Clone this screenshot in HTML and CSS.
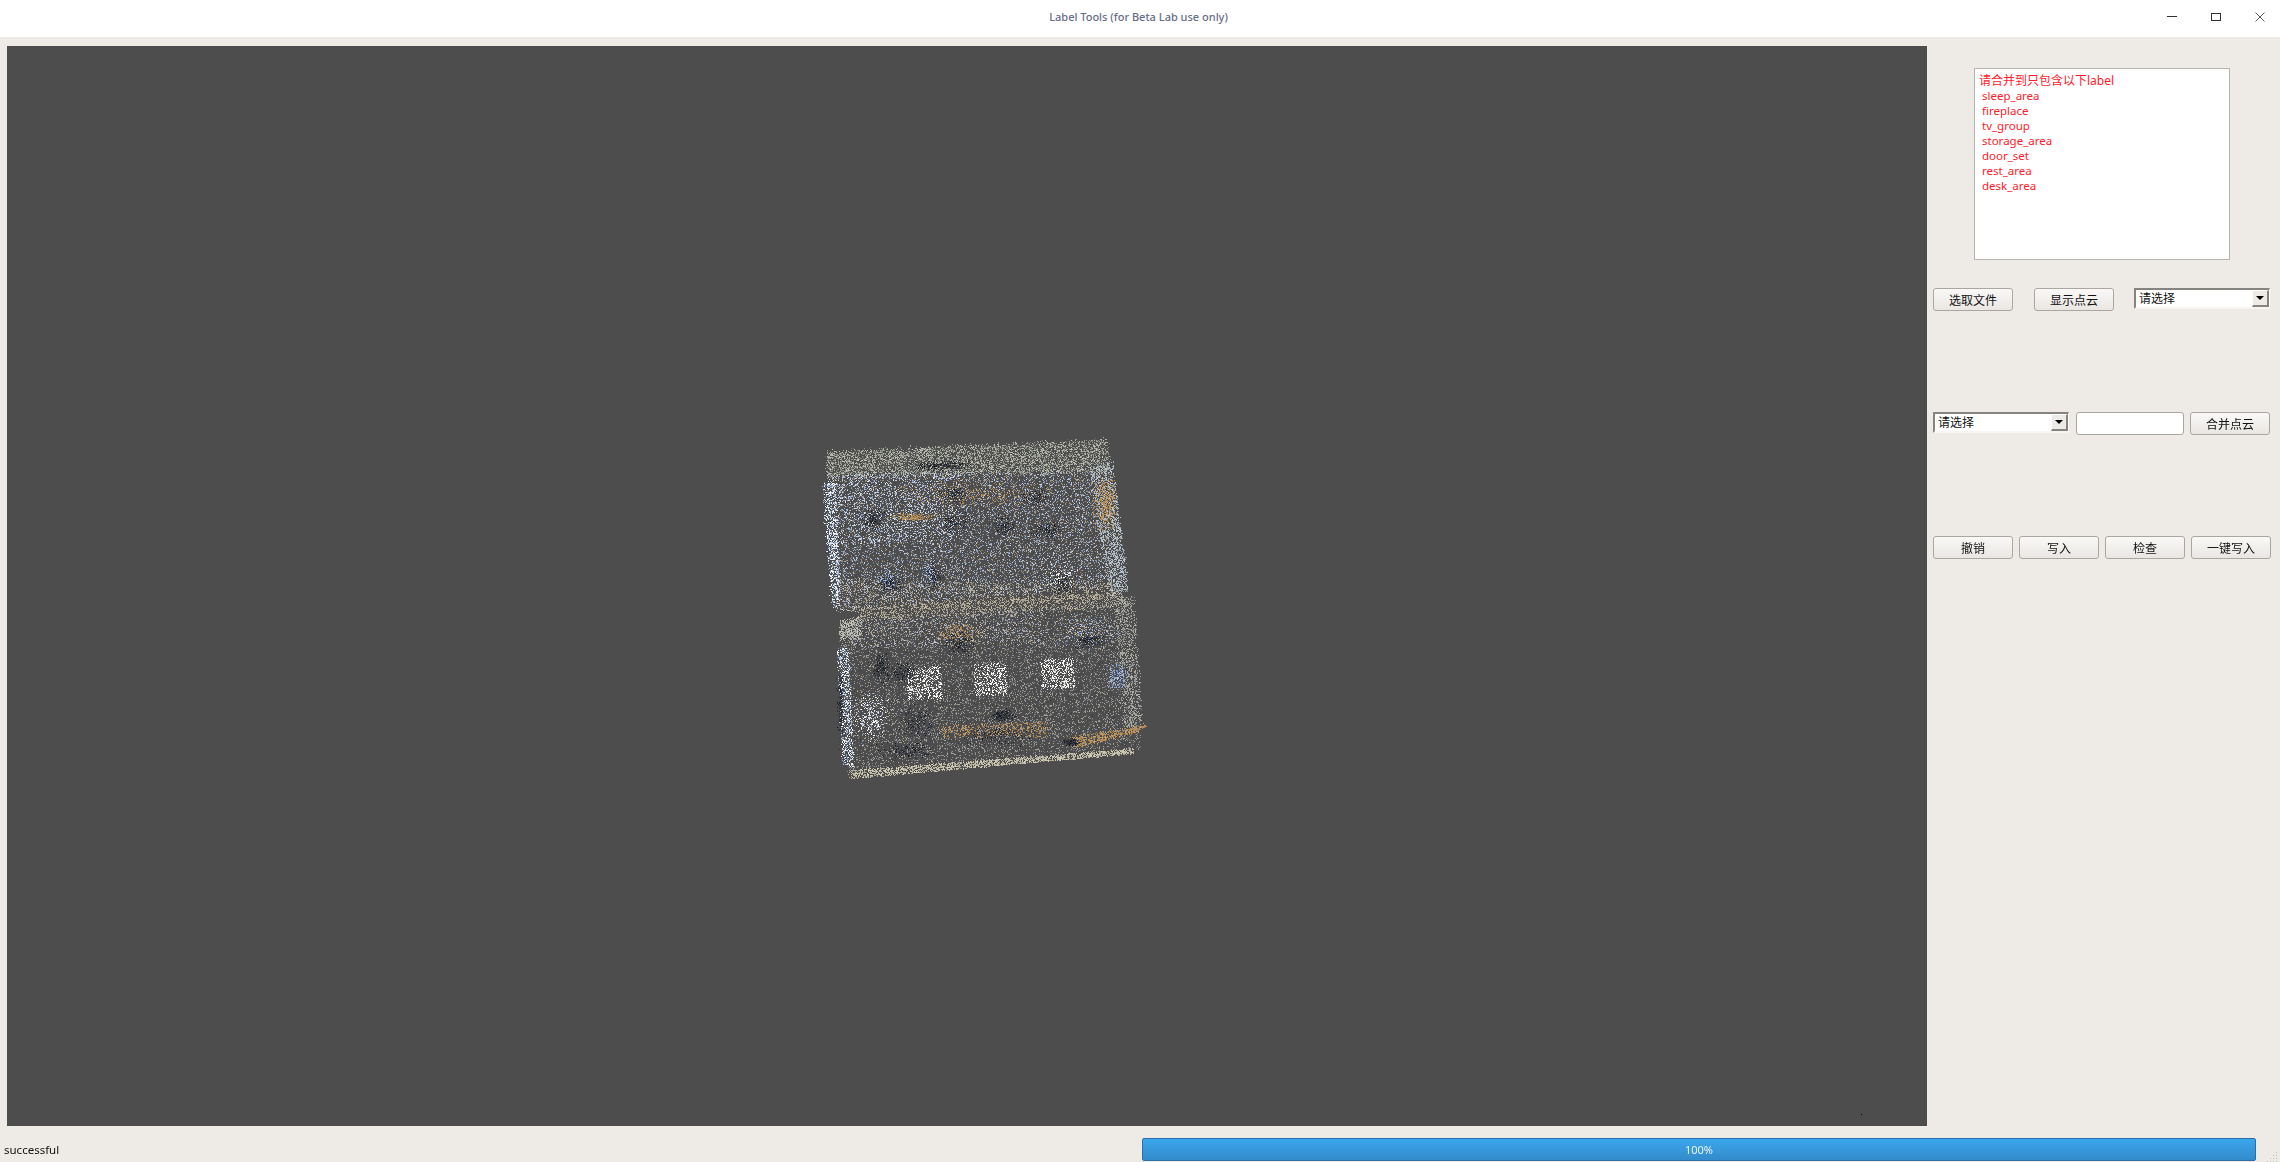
FILE: index.html
```html
<!DOCTYPE html>
<html lang="en">
<head>
    <meta charset="UTF-8">
    <title>Label Tools (for Beta Lab use only)</title>
    <link rel="stylesheet" href="styles.css">
</head>
<body>
    <header class="titlebar">
        <span class="title">Label Tools (for Beta Lab use only)</span>
        <div class="window-btns">
            <svg class="win-btn" width="12" height="12" viewBox="0 0 12 12"><path d="M1 5.5H11" stroke="#2e3436" stroke-width="1"/></svg>
            <svg class="win-btn" width="12" height="12" viewBox="0 0 12 12"><rect x="1.5" y="2.5" width="9" height="7" fill="none" stroke="#2e3436" stroke-width="1"/></svg>
            <svg class="win-btn" width="12" height="12" viewBox="0 0 12 12"><path d="M1.5 1.5L10.5 10.5M10.5 1.5L1.5 10.5" stroke="#55585a" stroke-width="1"/></svg>
        </div>
    </header>
    <main class="content">
        <div class="viewport">
            <canvas id="cloud" width="1920" height="1080"></canvas>
        </div>
        <aside class="panel">
            <div class="label-box">
                <div class="label-head">请合并到只包含以下label</div>
                <div>sleep_area</div>
                <div>fireplace</div>
                <div>tv_group</div>
                <div>storage_area</div>
                <div>door_set</div>
                <div>rest_area</div>
                <div>desk_area</div>
            </div>
            <div class="row row-file">
                <button class="btn">选取文件</button>
                <button class="btn">显示点云</button>
                <div class="combo"><span class="combo-text">请选择</span><span class="combo-arrow"></span></div>
            </div>
            <div class="row row-merge">
                <div class="combo"><span class="combo-text">请选择</span><span class="combo-arrow"></span></div>
                <input class="name-input" type="text">
                <button class="btn">合并点云</button>
            </div>
            <div class="row row-write">
                <button class="btn">撤销</button>
                <button class="btn">写入</button>
                <button class="btn">检查</button>
                <button class="btn">一键写入</button>
            </div>
        </aside>
    </main>
    <footer class="statusbar">
        <span class="status-text">successful</span>
        <div class="progress">100%</div>
        <svg class="grip" width="12" height="12" viewBox="0 0 12 12">
            <path d="M10 1h1v1h-1zM7 4h1v1H7zM10 4h1v1h-1zM4 7h1v1H4zM7 7h1v1H7zM10 7h1v1h-1zM1 10h1v1H1zM4 10h1v1H4zM7 10h1v1H7zM10 10h1v1h-1z" fill="#c4c0b8"/>
        </svg>
    </footer>
    <script src="cloud.js"></script>
</body>
</html>
```
FILE: styles.css
```css
* {
    box-sizing: border-box;
}
html, body {
    height: 100%;
}
body {
    margin: 0;
    display: flex;
    flex-direction: column;
    overflow: hidden;
    background-color: #eeebe7;
    color: #111;
    font-family: "Noto Sans", "Noto Sans CJK SC", sans-serif;
    font-size: 11px;
}
.titlebar {
    height: 37px;
    flex: none;
    display: flex;
    align-items: center;
    justify-content: center;
    background: #fff;
    position: relative;
}
.title {
    color: #666e88;
    font-size: 11px;
    font-weight: 500;
    margin: 0 3px 4px 0;
}
.window-btns {
    position: absolute;
    top: 11px;
    right: 14px;
    display: flex;
    gap: 32px;
}
.win-btn {
    display: block;
}
.content {
    height: 1089px;
    flex: none;
    display: flex;
}
.viewport {
    width: 1920px;
    height: 1080px;
    margin: 9px 0 0 7px;
    flex: none;
    background: #4d4d4d;
}
#cloud {
    display: block;
}
.panel {
    flex: 1;
    padding: 31px 0 0 6px;
}
.label-box {
    width: 256px;
    height: 192px;
    margin-left: 41px;
    padding: 4px 0 0 4px;
    background: #fff;
    border: 1px solid #b8b4ae;
    color: #ff1a2a;
    font-size: 11.5px;
    line-height: 15px;
}
.label-box div {
    padding-left: 3px;
}
.label-box .label-head {
    padding-left: 0;
    font-size: 12px;
}
.row {
    display: flex;
    height: 23px;
    margin-top: 101px;
}
.row-file {
    margin-top: 28px;
    gap: 21px;
}
.row-file .combo {
    margin-left: -1px;
}
.row-merge {
    gap: 7px;
}
.row-merge .btn {
    margin-left: -1px;
}
.row-write {
    gap: 6px;
}
.btn {
    width: 80px;
    height: 23px;
    padding: 0;
    background: linear-gradient(#faf9f8, #e9e6e2);
    border: 1px solid #aaa6a0;
    border-radius: 3px;
    color: #111;
    font-family: "Noto Sans CJK SC", sans-serif;
    font-size: 12px;
}
.combo {
    width: 136px;
    height: 21px;
    display: flex;
    background: #fff;
    border-style: solid;
    border-width: 2px 1px 2px 2px;
    border-color: #868480 #fff #f6f5f3 #868480;
    font-family: "Noto Sans CJK SC", sans-serif;
    font-size: 12px;
}
.combo-text {
    flex: 1;
    padding-left: 3px;
    line-height: 16px;
}
.combo-arrow {
    width: 17px;
    height: 17px;
    position: relative;
    background: #eeebe7;
    border-style: solid;
    border-width: 1px 2px 2px 1px;
    border-color: #fff #868480 #868480 #fff;
}
.combo-arrow::after {
    content: "";
    position: absolute;
    top: 5px;
    left: 3px;
    border-style: solid;
    border-width: 4px 4px 0;
    border-color: #000 transparent transparent;
}
.name-input {
    width: 108px;
    height: 23px;
    padding: 0 4px;
    background: #fff;
    border: 1px solid #aaa6a0;
    border-radius: 3px;
    outline: none;
}
.statusbar {
    flex: 1;
    display: flex;
    align-items: flex-start;
    padding: 12px 2px 0 4px;
}
.status-text {
    font-size: 11.5px;
    line-height: 23px;
    margin-right: auto;
}
.progress {
    width: 1114px;
    height: 23px;
    border: 1px solid #2c6fa8;
    border-radius: 2px;
    background: linear-gradient(#3aa7ec, #338bcb);
    color: #eaf4fc;
    font-size: 11px;
    line-height: 21px;
    text-align: center;
}
.grip {
    margin: 13px 0 0 10px;
}
```
FILE: cloud.js
```js
// draws the room scan as single pixel points, coordinates are measured
// from a 3x crop with its corner at (790,420) on the screen
const canvas = document.getElementById('cloud');
const ctx = canvas.getContext('2d');

let seed = 20240117;
function rnd() {
    seed = (seed * 1664525 + 1013904223) >>> 0;
    return seed / 4294967296;
}

function gauss() {
    return (rnd() + rnd() + rnd() - 1.5) / 1.5;
}

function putPoint(zx, zy, color) {
    ctx.fillStyle = color;
    ctx.fillRect(Math.round(783 + zx / 3), Math.round(374 + zy / 3), 1, 1);
}

function pick(list) {
    return list[Math.floor(rnd() * list.length)];
}

// quad corners go tl, tr, br, bl; soft is the jitter on the edges
function fillQuad(q, count, colors, soft) {
    for (let i = 0; i < count; i++) {
        const u = rnd();
        const v = rnd();
        const topX = q[0][0] + (q[1][0] - q[0][0]) * u;
        const topY = q[0][1] + (q[1][1] - q[0][1]) * u;
        const botX = q[3][0] + (q[2][0] - q[3][0]) * u;
        const botY = q[3][1] + (q[2][1] - q[3][1]) * u;
        putPoint(topX + (botX - topX) * v + gauss() * soft, topY + (botY - topY) * v + gauss() * soft, pick(colors));
    }
}

// blobs fall off towards the rim so they don't read as ellipses
function fillBlob(cx, cy, rx, ry, count, colors) {
    for (let i = 0; i < count; i++) {
        putPoint(cx + gauss() * rx * 1.4, cy + gauss() * ry * 1.4, pick(colors));
    }
}

const wall = ['#9a9e94', '#a3a79c', '#8d9288', '#b4b6aa', '#7d8078', '#c2c2b6', '#6f726c'];
const floorUp = ['#a9bad6', '#8c9cb8', '#b9c4d8', '#7f8a9c', '#8f8a80', '#a89c88', '#6f7480', '#c9d2e2', '#8fa4cc', '#a58c68'];
const floorLow = ['#8c8c88', '#7b7d80', '#9a968c', '#a8a69e', '#6c6e70', '#b0a590', '#8a94a8', '#3c3e42'];
const orange = ['#b58a4e', '#c0914f', '#a57f4d', '#d0a060', '#97805f'];
const dark = ['#2a2c30', '#1e2026', '#34363c', '#3a3f4c', '#222a3c', '#44464c', '#14161c'];
const white = ['#ffffff', '#f2f2f0', '#e6e6e4', '#d8d8d4', '#ffffff'];
const edge = ['#ffffff', '#dfe8f4', '#b8cce6', '#9db4d4', '#eef2f8', '#6f7f94'];
const tan = ['#a8a08e', '#b8ae9a', '#8e8a7c', '#c8bca6', '#969888'];
const blue = ['#9cb8e0', '#7f9ed4', '#b4c8e4', '#5c7cc8', '#88a0c0'];

// upper room
fillQuad([[108, 95], [950, 58], [960, 155], [112, 170]], 6000, wall, 14);
fillQuad([[110, 165], [910, 150], [960, 500], [135, 570]], 10500, floorUp, 14);
fillQuad([[125, 165], [500, 155], [500, 360], [135, 370]], 1000, ['#c0cee6', '#aabde0', '#e0e6f0'], 15);
fillQuad([[900, 150], [965, 120], [1015, 510], [960, 530]], 1900, ['#a4b4cc', '#9aa09a', '#b8c4d4', '#8e9490', '#c0c8d0'], 8);
fillQuad([[130, 480], [960, 490], [1000, 530], [140, 575]], 1300, tan, 10);
fillQuad([[95, 190], [135, 180], [150, 560], [125, 560]], 900, edge, 6);
fillBlob(945, 250, 34, 80, 420, orange);
fillBlob(370, 290, 60, 12, 190, orange);
fillBlob(560, 220, 240, 40, 350, orange);
fillBlob(450, 135, 80, 14, 240, dark);
[[250, 295, 30, 28], [490, 310, 42, 30], [640, 320, 44, 30], [740, 230, 44, 30], [770, 330, 44, 26], [430, 470, 28, 38], [300, 490, 34, 26], [815, 490, 34, 34], [490, 225, 34, 26]].forEach(function (b) {
    fillBlob(b[0], b[1], b[2], b[3], 130, dark);
});
fillBlob(810, 470, 50, 34, 70, white);
fillBlob(420, 465, 30, 38, 60, blue);
fillBlob(290, 480, 34, 26, 60, blue);

// seam between the rooms
fillQuad([[195, 560], [1000, 515], [1010, 560], [200, 600]], 1800, tan, 8);

// lower room
fillQuad([[150, 600], [1030, 530], [1048, 985], [172, 1055]], 11000, floorLow, 14);
fillQuad([[170, 600], [760, 570], [760, 670], [170, 680]], 900, ['#b0b8c8', '#c8ccd4', '#a08c70', '#8c98b4'], 12);
fillQuad([[970, 535], [1030, 530], [1060, 920], [1005, 940]], 900, ['#a8aca4', '#989c98', '#b8b4a8', '#888c88'], 8);
fillQuad([[140, 680], [175, 680], [190, 1040], [155, 1030]], 800, edge, 5);
fillQuad([[150, 600], [215, 590], [210, 655], [145, 660]], 350, ['#b4b4a8', '#c4c4b8', '#9c9c94'], 5);
fillQuad([[175, 1050], [1030, 985], [1032, 1000], [175, 1076]], 2000, ['#b8b4a0', '#c8c4b0', '#a8a492', '#d4d0bc'], 2);
fillBlob(240, 890, 50, 70, 280, ['#ffffff', '#d8e0f0', '#b8c4dc']);
fillBlob(500, 640, 70, 34, 170, orange);
fillBlob(880, 630, 100, 52, 320, ['#d0c4b0', '#9cb0d8', '#c8ccd8', '#5c7cc8', '#a89878']);
fillBlob(980, 770, 34, 44, 170, blue);
fillQuad([[450, 912], [770, 905], [770, 950], [450, 950]], 450, orange, 6);
fillQuad([[830, 950], [1070, 915], [1040, 935], [850, 985]], 520, orange, 5);

// three bright ceiling lights
fillQuad([[350, 742], [450, 738], [455, 835], [352, 838]], 420, white, 4);
fillQuad([[550, 732], [650, 726], [650, 822], [555, 826]], 380, white, 4);
fillQuad([[750, 718], [850, 712], [852, 802], [755, 806]], 440, white, 4);

[[505, 670, 38, 32], [270, 740, 24, 50], [340, 760, 44, 30], [380, 905, 44, 44], [640, 885, 36, 18], [620, 950, 110, 30], [350, 990, 80, 24], [900, 660, 44, 20], [150, 850, 10, 110], [840, 965, 22, 10]].forEach(function (b) {
    fillBlob(b[0], b[1], b[2], b[3], 200, dark);
});

// stray point near the corner of the view
ctx.fillStyle = '#000';
ctx.fillRect(1854, 1068, 1, 1);
```
